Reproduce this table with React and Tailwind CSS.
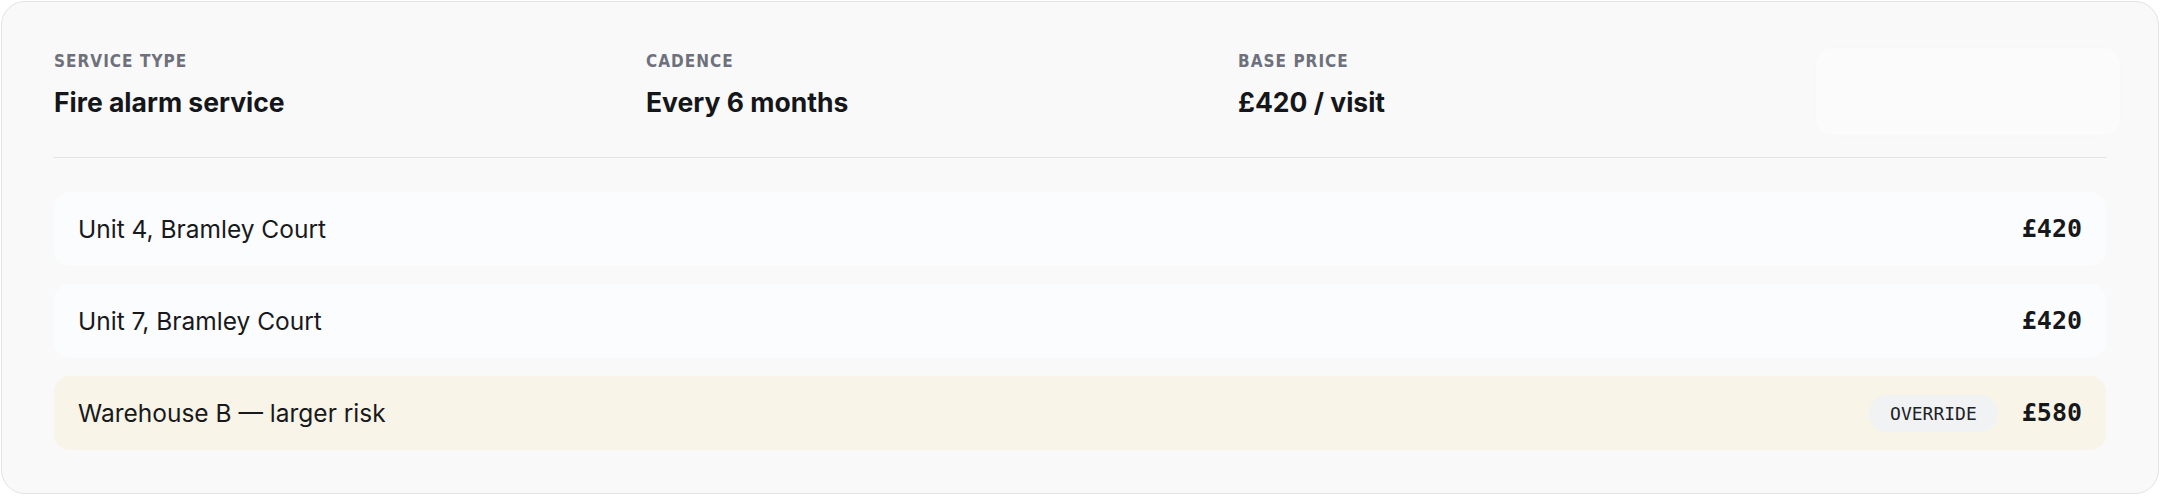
import React from 'react'

const rows = [
  { name: 'Unit 4, Bramley Court', price: '£420' },
  { name: 'Unit 7, Bramley Court', price: '£420' },
  { name: 'Warehouse B — larger risk', price: '£580', override: true },
]

const meta = [
  { label: 'Service type', value: 'Fire alarm service' },
  { label: 'Cadence', value: 'Every 6 months' },
  { label: 'Base price', value: '£420 / visit' },
]

function MetaField({ label, value }) {
  return (
    <div>
      <p className="font-['Liberation_Sans_Narrow','DejaVu_Sans_Condensed',sans-serif] text-[17px] leading-5 font-bold uppercase tracking-[0.06em] text-[#6e717b]">
        {label}
      </p>
      <p className="mt-[15px] text-[26.5px] leading-8 font-bold text-[#15161a]">{value}</p>
    </div>
  )
}

function SiteRow({ name, price, override }) {
  return (
    <div
      className={
        override
          ? 'flex h-[74px] items-center justify-between rounded-2xl bg-[#f8f4e7] px-6'
          : 'flex h-[74px] items-center justify-between rounded-2xl bg-[#fbfcfd] px-6'
      }
    >
      <span className="text-[24.5px] text-[#18191c]">{name}</span>
      <div className="flex items-center gap-6">
        {override && (
          <span className="flex h-[37px] items-center rounded-full bg-[#f1f2f4] px-[21px] font-['DejaVu_Sans_Mono',monospace] text-[18px] text-[#202226]">
            OVERRIDE
          </span>
        )}
        <span className="font-['DejaVu_Sans_Mono',monospace] text-[25px] font-bold text-[#17181b]">{price}</span>
      </div>
    </div>
  )
}

export default function App() {
  return (
    <div className="p-px font-['Inter',sans-serif]">
      <div className="rounded-3xl border border-[#e4e4e8] bg-[#f9f9f9] px-[52px] pt-[49px] pb-[43px]">
        <div className="grid grid-cols-[1fr_1fr_1fr_276px] gap-6">
          {meta.map((m) => (
            <MetaField key={m.label} label={m.label} value={m.value} />
          ))}
          <div className="-mx-[14px] -mt-[3px] -mb-[20px] h-[87px] rounded-2xl bg-[#fbfbfb] shadow-[0_0_12px_rgba(0,0,0,0.012)]" />
        </div>
        <div className="mt-[39px] h-px bg-[#e2e3e5]" />
        <div className="mt-[34px] flex flex-col gap-[18px]">
          {rows.map((r) => (
            <SiteRow key={r.name} {...r} />
          ))}
        </div>
      </div>
    </div>
  )
}
